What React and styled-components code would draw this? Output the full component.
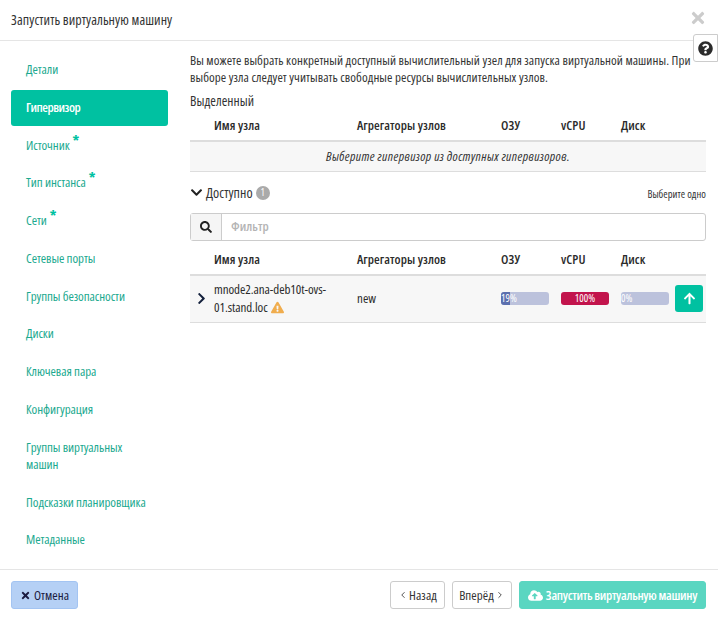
import React from "react";
import styled, { createGlobalStyle } from "styled-components";
import { ChevronLeft, ChevronRight } from "lucide-react";
import { FaTimes, FaQuestionCircle, FaChevronDown, FaChevronRight, FaSearch, FaExclamationTriangle, FaArrowUp, FaCloudUploadAlt } from "react-icons/fa";

const Global = createGlobalStyle`
  html, body { margin: 0; padding: 0; background: #fff; }
  body { font-family: "Open Sans", Roboto, sans-serif; font-stretch: 75%; font-size: 13px; letter-spacing: 0.06px; line-height: 17px; color: #2b2b2b; }
  * { box-sizing: border-box; }
`;

const Modal = styled.div`
  width: 718px; height: 620px; display: flex; flex-direction: column; background: #fff; position: relative; overflow: hidden;
`;
const Header = styled.header`
  height: 41px; flex: none; border-bottom: 1px solid #e5e5e5; display: flex; align-items: center; justify-content: space-between; padding: 0 11px 0 11px;
`;
const Title = styled.h4`
  margin: 0; font-size: 14px; font-weight: 400; line-height: 20px; color: #333;
`;
const Close = styled.span`
  color: #ccc; font-size: 18px; display: flex; margin-top: -5px;
`;
const HelpButton = styled.div`
  position: absolute; right: 0; top: 34px; width: 25px; height: 28px; background: #fff; border: 1px solid #ccc; border-radius: 3px 0 0 3px; display: flex; align-items: center; justify-content: center; font-size: 15px; color: #2b2b2b;
`;
const Body = styled.div`
  flex: 1; display: flex; min-height: 0;
`;
const Nav = styled.nav`
  width: 179px; flex: none; padding: 11.2px 11px 0; display: flex; flex-direction: column; gap: 1.8px;
`;
const NavItem = styled.div`
  padding: 8.8px 15px 10.2px; border-radius: 3px; letter-spacing: ${p => (p.$active ? "-0.5px" : "-0.08px")}; color: ${p => (p.$active ? "#fff" : "#1ba98f")}; background: ${p => (p.$active ? "#00c1a1" : "transparent")}; font-weight: ${p => (p.$active ? 600 : 400)};
`;
const Star = styled.span`
  color: #00c1a1; font-size: 15px; font-weight: 700; line-height: 0; margin-left: 3px; position: relative; top: -4px;
`;
const Main = styled.main`
  flex: 1; padding: 11px 12px 0 11px; min-width: 0;
`;
const Intro = styled.p`
  margin: 0; color: #333;
`;
const Sub = styled.div`
  margin-top: 7px; font-size: 13.5px; color: #333;
`;
const Cols = styled.div`
  display: grid; grid-template-columns: 24px 143px 144px 60px 60px 54px 1fr; align-items: center;
`;
const HeadRow = styled(Cols)`
  height: ${p => p.$h}px; padding-top: ${p => p.$top}px; border-bottom: 2px solid #ddd; font-weight: 600; color: #2b2b2b;
`;
const Empty = styled.div`
  height: 30px; background: #f7f7f7; border-bottom: 1px solid #ddd; display: flex; align-items: center; justify-content: center; font-style: italic; letter-spacing: 0.38px; color: #333;
`;
const AvailRow = styled.div`
  display: flex; align-items: center; justify-content: space-between; margin-top: 12px; height: 17px;
`;
const AvailLeft = styled.div`
  display: flex; align-items: center; font-size: 14px; color: #333;
`;
const Chevron = styled.span`
  display: flex; font-size: 13px; margin-right: 3px; color: #222;
`;
const Badge = styled.span`
  width: 14px; height: 14px; border-radius: 50%; background: #aaa; color: #fff; font-size: 10px; display: flex; align-items: center; justify-content: center; margin-left: 3px;
`;
const Hint = styled.span`
  font-size: 10.5px; color: #333; margin-top: 4px;
`;
const Filter = styled.div`
  margin-top: 12px; height: 28px; display: flex; border: 1px solid #ccc; border-radius: 3px;
`;
const FilterAddon = styled.span`
  width: 31px; background: #f5f5f5; border-right: 1px solid #ccc; display: flex; align-items: center; justify-content: center; font-size: 12px; color: #222;
`;
const FilterText = styled.span`
  padding: 0 0 2px 9px; display: flex; align-items: center; font-weight: 600; color: #b4b4b4;
`;
const DataRow = styled(Cols)`
  height: 47px; padding-bottom: 2px; background: #f7f7f7; border-bottom: 1px solid #ddd;
`;
const Expand = styled.span`
  display: flex; justify-content: center; font-size: 13px; color: #14213d; margin-left: -2px;
`;
const NodeName = styled.span`
  line-height: 18px; letter-spacing: -0.08px;
`;
const Warn = styled(FaExclamationTriangle)`
  color: #f0ad4e; font-size: 13px; vertical-align: -2px; margin-left: 3px;
`;
const Bar = styled.div`
  width: 48px; height: 13px; border-radius: 3px; background: ${p => p.$bg || "#bcc2dc"}; position: relative; overflow: hidden; color: #fff; font-size: 10.5px; line-height: 13px; text-align: ${p => (p.$center ? "center" : "left")};
`;
const BarFill = styled.div`
  position: absolute; left: 0; top: 0; bottom: 0; background: #5b6fae;
`;
const BarLabel = styled.span`
  position: relative;
`;
const Action = styled.div`
  display: flex; justify-content: flex-end; padding-right: 3px;
`;
const UpButton = styled.div`
  width: 28px; height: 27px; border-radius: 3px; background: #00c1a1; color: #fff; display: flex; align-items: center; justify-content: center; font-size: 13px;
`;
const Footer = styled.footer`
  height: 51px; flex: none; border-top: 1px solid #e5e5e5; display: flex; align-items: center; justify-content: space-between; padding: 0 12px 0 11px;
`;
const Group = styled.div`
  display: flex; gap: 7px;
`;
const Button = styled.div`
  height: 28px; width: ${p => p.$w}px; display: flex; align-items: center; justify-content: center; gap: 1px; border-radius: 3px; border: 1px solid #ccc; background: #fff; color: #333;
`;
const Cancel = styled(Button)`
  background: #b5d0f5; border-color: #a3c4f2; color: #1a1a40; gap: 3px;
`;
const Launch = styled(Button)`
  background: #5ad6c1; border-color: #5ad6c1; color: #fff; font-weight: 600; letter-spacing: -0.3px; gap: 3px;
`;

const nav = [
  ["Детали"], ["Гипервизор", false, true], ["Источник", true], ["Тип инстанса", true], ["Сети", true],
  ["Сетевые порты"], ["Группы безопасности"], ["Диски"], ["Ключевая пара"], ["Конфигурация"],
  ["Группы виртуальных машин"], ["Подсказки планировщика"], ["Метаданные"],
];

const Head = ({ h, top }) => (
  <HeadRow $h={h} $top={top}>
    <span />
    <span>Имя узла</span>
    <span>Агрегаторы узлов</span>
    <span>ОЗУ</span>
    <span>vCPU</span>
    <span>Диск</span>
    <span />
  </HeadRow>
);

export default function App() {
  return (
    <Modal>
      <Global />
      <Header>
        <Title>Запустить виртуальную машину</Title>
        <Close><FaTimes /></Close>
      </Header>
      <HelpButton><FaQuestionCircle /></HelpButton>
      <Body>
        <Nav>
          {nav.map(([t, star, active]) => (
            <NavItem key={t} $active={active}>{t}{star && <Star>*</Star>}</NavItem>
          ))}
        </Nav>
        <Main>
          <Intro>Вы можете выбрать конкретный доступный вычислительный узел для запуска виртуальной машины. При выборе узла следует учитывать свободные ресурсы вычислительных узлов.</Intro>
          <Sub>Выделенный</Sub>
          <Head h={32} top={1} />
          <Empty>Выберите гипервизор из доступных гипервизоров.</Empty>
          <AvailRow>
            <AvailLeft><Chevron><FaChevronDown /></Chevron>Доступно<Badge>1</Badge></AvailLeft>
            <Hint>Выберите одно</Hint>
          </AvailRow>
          <Filter>
            <FilterAddon><FaSearch /></FilterAddon>
            <FilterText>Фильтр</FilterText>
          </Filter>
          <Head h={35} top={3} />
          <DataRow>
            <Expand><FaChevronRight /></Expand>
            <NodeName>mnode2.ana-deb10t-ovs-01.stand.loc<Warn /></NodeName>
            <span>new</span>
            <Bar><BarFill style={{ width: "19%" }} /><BarLabel>19%</BarLabel></Bar>
            <Bar $center $bg="#c2144c"><BarLabel>100%</BarLabel></Bar>
            <Bar><BarLabel>0%</BarLabel></Bar>
            <Action><UpButton><FaArrowUp /></UpButton></Action>
          </DataRow>
        </Main>
      </Body>
      <Footer>
        <Cancel $w={67}><FaTimes size={11} />Отмена</Cancel>
        <Group>
          <Button $w={55}><ChevronLeft size={10} strokeWidth={2} />Назад</Button>
          <Button $w={60}>Вперёд<ChevronRight size={10} strokeWidth={2} /></Button>
          <Launch $w={187}><FaCloudUploadAlt size={15} />Запустить виртуальную машину</Launch>
        </Group>
      </Footer>
    </Modal>
  );
}
